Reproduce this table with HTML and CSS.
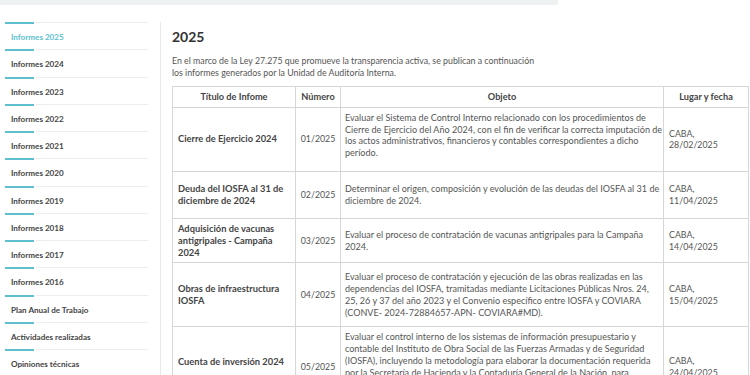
FILE: index.html
```html
<!DOCTYPE html>
<html lang="es">
<head>
<meta charset="utf-8">
<title>Informes 2025</title>
<link rel="stylesheet" href="styles.css">
</head>
<body>
<div class="topbar"></div>
<div class="layout">
  <nav class="sidebar">
    <a class="nav-item active" href="#">Informes 2025</a>
    <a class="nav-item" href="#">Informes 2024</a>
    <a class="nav-item" href="#">Informes 2023</a>
    <a class="nav-item" href="#">Informes 2022</a>
    <a class="nav-item" href="#">Informes 2021</a>
    <a class="nav-item" href="#">Informes 2020</a>
    <a class="nav-item" href="#">Informes 2019</a>
    <a class="nav-item" href="#">Informes 2018</a>
    <a class="nav-item" href="#">Informes 2017</a>
    <a class="nav-item" href="#">Informes 2016</a>
    <a class="nav-item" href="#">Plan Anual de Trabajo</a>
    <a class="nav-item" href="#">Actividades realizadas</a>
    <a class="nav-item" href="#">Opiniones técnicas</a>
  </nav>
  <main class="content">
    <h1 class="title">2025</h1>
    <p class="intro">En el marco de la Ley 27.275 que promueve la transparencia activa, se publican a continuación<br>los informes generados por la Unidad de Auditoría Interna.</p>
    <table class="reports">
      <colgroup>
        <col class="c-title"><col class="c-num"><col class="c-obj"><col class="c-date">
      </colgroup>
      <thead>
        <tr class="head">
          <th>Título de Infome</th>
          <th>Número</th>
          <th>Objeto</th>
          <th>Lugar y fecha</th>
        </tr>
      </thead>
      <tbody>
        <tr class="r1">
          <td class="t">Cierre de Ejercicio 2024</td>
          <td class="n">01/2025</td>
          <td class="o raised">Evaluar el Sistema de Control Interno relacionado con los procedimientos de Cierre de Ejercicio del Año 2024, con el fin de verificar la correcta imputación de los actos administrativos, financieros y contables correspondientes a dicho período.</td>
          <td class="d">CABA,<br>28/02/2025</td>
        </tr>
        <tr class="r2">
          <td class="t">Deuda del IOSFA al 31 de diciembre de 2024</td>
          <td class="n">02/2025</td>
          <td class="o">Determinar el origen, composición y evolución de las deudas del IOSFA al 31 de diciembre de 2024.</td>
          <td class="d">CABA,<br>11/04/2025</td>
        </tr>
        <tr class="r3">
          <td class="t">Adquisición de vacunas antigripales - Campaña 2024</td>
          <td class="n">03/2025</td>
          <td class="o">Evaluar el proceso de contratación de vacunas antigripales para la Campaña 2024.</td>
          <td class="d">CABA,<br>14/04/2025</td>
        </tr>
        <tr class="r4">
          <td class="t">Obras de infraestructura IOSFA</td>
          <td class="n">04/2025</td>
          <td class="o">Evaluar el proceso de contratación y ejecución de las obras realizadas en las dependencias del IOSFA, tramitadas mediante Licitaciones Públicas Nros. 24,<br>25, 26 y 37 del año 2023 y el Convenio específico entre IOSFA y COVIARA (CONVE- 2024-72884657-APN- COVIARA#MD).</td>
          <td class="d">CABA,<br>15/04/2025</td>
        </tr>
        <tr class="r5">
          <td class="t raised-sm">Cuenta de inversión 2024</td>
          <td class="n">05/2025</td>
          <td class="o">Evaluar el control interno de los sistemas de información presupuestario y contable del Instituto de Obra Social de las Fuerzas Armadas y de Seguridad (IOSFA), incluyendo la metodología para elaborar la documentación requerida por la Secretaría de Hacienda y la Contaduría General de la Nación, para elaborar la Cuenta de Inversión correspondiente al Ejercicio 2024, conforme a la normativa vigente aplicable.</td>
          <td class="d">CABA,<br>24/04/2025</td>
        </tr>
      </tbody>
    </table>
  </main>
</div>
</body>
</html>
```
FILE: styles.css
```css
html, body {
  margin: 0;
  padding: 0;
  overflow: hidden;
  background: #fff;
}
body {
  font-family: Lato, "Open Sans", Arial, sans-serif;
  color: #555;
  width: 750px;
  height: 375px;
}
.topbar {
  width: 558px;
  height: 5px;
  background: #eef2f2;
}
.layout {
  display: flex;
  align-items: flex-start;
  padding-top: 17px;
}
.sidebar {
  width: 160px;
  flex: none;
  border-right: 1px solid #e9e9e9;
  display: flex;
  flex-direction: column;
  min-height: 360px;
}
.nav-item {
  display: block;
  height: 27.25px;
  flex: none;
  box-sizing: border-box;
  padding: 9px 0 0 11px;
  font-size: 8.1px;
  font-weight: 700;
  line-height: 12px;
  color: #444;
  text-decoration: none;
  background:
    linear-gradient(#5fbfcf, #5fbfcf) 5px 0 / 29px 2px no-repeat,
    linear-gradient(#ededed, #ededed) 36px 0 / 112px 1px no-repeat;
}
.nav-item.active {
  color: #5cbfcf;
}
.content {
  flex: none;
  padding-left: 11px;
}
.title {
  margin: 6px 0 0 0;
  font-size: 14px;
  line-height: 18px;
  font-weight: 700;
  color: #333;
}
.intro {
  margin: 9px 0 0 0;
  font-size: 8.8px;
  line-height: 12px;
  color: #555;
}
.reports {
  margin-top: 7px;
  border-collapse: collapse;
  table-layout: fixed;
  width: 576px;
  font-size: 8.8px;
  line-height: 11.8px;
}
.c-title { width: 123px; }
.c-num { width: 45px; }
.c-obj { width: 323px; }
.c-date { width: 85px; }
.reports th,
.reports td {
  border: 1px solid #d6d6d6;
  padding: 4px 4px;
  vertical-align: middle;
}
.reports th {
  font-weight: 700;
  font-size: 9.2px;
  color: #444;
  text-align: center;
  height: 8px;
}
.reports td {
  color: #555;
  text-align: left;
}
.reports td.t {
  font-weight: 700;
  font-size: 9.3px;
  color: #444;
  padding-left: 5px;
}
.reports td.n {
  text-align: center;
}
.reports td.o {
  font-size: 9.05px;
  padding-right: 0;
}
.reports td.d {
  padding-left: 5px;
}
.r1 { height: 63px; }
.r2 { height: 47px; }
.r3 { height: 44px; }
.r4 { height: 64px; }
.reports td.raised { padding-bottom: 12px; }
.reports td.raised-sm { padding-bottom: 14px; }
```
